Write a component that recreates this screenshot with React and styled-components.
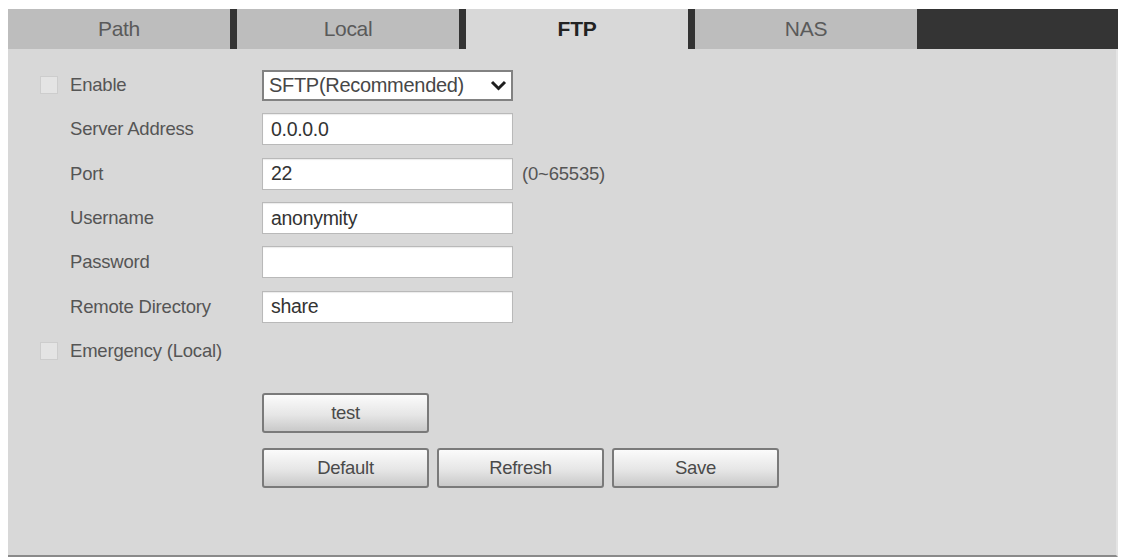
import React from "react";
import styled, { createGlobalStyle } from "styled-components";

const GlobalStyle = createGlobalStyle`
  html, body {
    margin: 0;
    padding: 0;
    background: #ffffff;
    font-family: "Liberation Sans", Arial, sans-serif;
  }
`;

const Page = styled.div`
  padding: 9px 5px 0 8px;
  width: 1110px;
`;

const TabBar = styled.div`
  display: flex;
  height: 40px;
`;

const Tab = styled.div`
  width: 222px;
  display: flex;
  align-items: center;
  justify-content: center;
  font-size: 21px;
  letter-spacing: -0.3px;
  color: ${(p) => (p.active ? "#222" : "#5a5a5a")};
  font-weight: ${(p) => (p.active ? "bold" : "normal")};
  background: ${(p) => (p.active ? "#d8d8d8" : "#bdbdbd")};
  border-left: ${(p) => (p.first ? "none" : "7px solid #333")};
`;

const TabFill = styled.div`
  flex: 1;
  background: #343434;
`;

const Panel = styled.div`
  height: 508px;
  background: #d8d8d8;
  border-bottom: 2px solid #8a8a8a;
  border-right: 2px solid #e4e4e4;
  padding: 14px 0 0 32px;
  box-sizing: border-box;
`;

const Row = styled.div`
  display: flex;
  align-items: center;
  height: 44.3px;
`;

const CheckCell = styled.div`
  width: 30px;
  display: flex;
  align-items: center;
`;

const Check = styled.span`
  width: 18px;
  height: 18px;
  background: #e4e4e4;
  border: 1px solid #cdcdcd;
  box-sizing: border-box;
`;

const Label = styled.div`
  width: 192px;
  font-size: 18.5px;
  letter-spacing: -0.2px;
  color: #555;
`;

const Field = styled.input`
  width: 251px;
  height: 32px;
  box-sizing: border-box;
  border: 1px solid #b9b9b9;
  box-shadow: inset 0 1px 1px rgba(0, 0, 0, 0.08);
  background: #fff;
  padding: 0 8px;
  font-family: "Liberation Sans", Arial, sans-serif;
  font-size: 19.5px;
  letter-spacing: -0.3px;
  color: #333;
  outline: none;
`;

const SelectWrap = styled.div`
  position: relative;
  width: 251px;
  height: 31px;
`;

const Select = styled.select`
  appearance: none;
  width: 100%;
  height: 100%;
  box-sizing: border-box;
  border: 2px solid #828282;
  background: #fff;
  padding: 0 5px;
  font-family: "Liberation Sans", Arial, sans-serif;
  font-size: 20px;
  letter-spacing: -0.3px;
  color: #474747;
  outline: none;
`;

const Chevron = styled.svg`
  position: absolute;
  right: 6px;
  top: 10px;
  pointer-events: none;
`;

const Hint = styled.span`
  margin-left: 9px;
  font-size: 18.5px;
  letter-spacing: -0.2px;
  color: #555;
`;

const Buttons = styled.div`
  margin: 20px 0 0 222px;
  display: flex;
  flex-direction: column;
  gap: 15px;
`;

const ButtonRow = styled.div`
  display: flex;
  gap: 8px;
`;

const Button = styled.button`
  width: 167px;
  height: 40px;
  border: 2px solid #7a7a7a;
  border-radius: 3px;
  background: linear-gradient(#fbfbfb 0%, #e6e6e6 55%, #c9c9c9 100%);
  font-family: "Liberation Sans", Arial, sans-serif;
  font-size: 18.5px;
  letter-spacing: -0.3px;
  color: #4a4a4a;
  cursor: pointer;
`;

const fields = [
  { label: "Server Address", value: "0.0.0.0" },
  { label: "Port", value: "22", hint: "(0~65535)" },
  { label: "Username", value: "anonymity" },
  { label: "Password", value: "", type: "password" },
  { label: "Remote Directory", value: "share" },
];

export default function App() {
  return (
    <>
      <GlobalStyle />
      <Page>
        <TabBar>
          <Tab first>Path</Tab>
          <Tab>Local</Tab>
          <Tab active>FTP</Tab>
          <Tab>NAS</Tab>
          <TabFill />
        </TabBar>
        <Panel>
          <Row>
            <CheckCell>
              <Check />
            </CheckCell>
            <Label>Enable</Label>
            <SelectWrap>
              <Select defaultValue="sftp">
                <option value="sftp">SFTP(Recommended)</option>
                <option value="ftp">FTP</option>
              </Select>
              <Chevron width="17" height="11" viewBox="0 0 17 11">
                <path d="M2 2 L8.5 8.5 L15 2" fill="none" stroke="#1e1e1e" strokeWidth="3" />
              </Chevron>
            </SelectWrap>
          </Row>
          {fields.map((f) => (
            <Row key={f.label}>
              <CheckCell />
              <Label>{f.label}</Label>
              <Field type={f.type || "text"} defaultValue={f.value} />
              {f.hint && <Hint>{f.hint}</Hint>}
            </Row>
          ))}
          <Row>
            <CheckCell>
              <Check />
            </CheckCell>
            <Label>Emergency (Local)</Label>
          </Row>
          <Buttons>
            <ButtonRow>
              <Button>test</Button>
            </ButtonRow>
            <ButtonRow>
              <Button>Default</Button>
              <Button>Refresh</Button>
              <Button>Save</Button>
            </ButtonRow>
          </Buttons>
        </Panel>
      </Page>
    </>
  );
}
